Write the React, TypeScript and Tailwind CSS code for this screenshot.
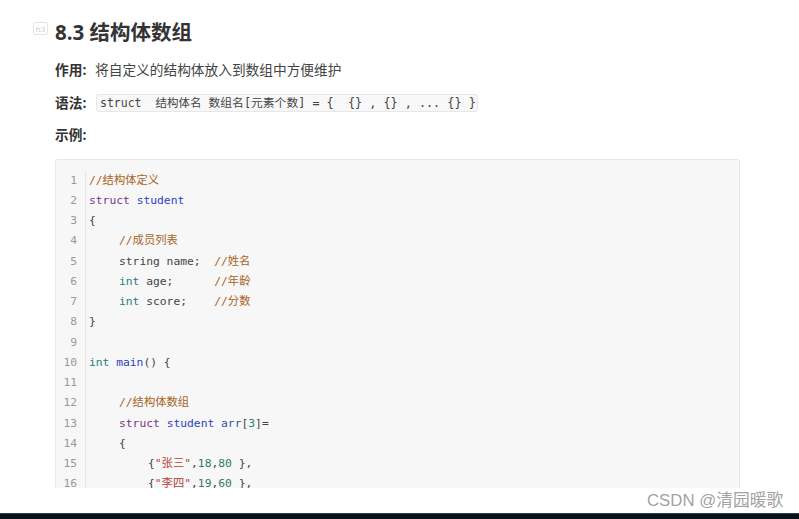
import React from 'react';

const mono = `font-['DejaVu_Sans_Mono','Noto_Sans_CJK_SC',monospace]`;

const kw = 'text-[#77358a]';
const ty = 'text-[#1f7f7f]';
const fn = 'text-[#2b3fc4]';
const cm = 'text-[#a8641f]';
const st = 'text-[#b5443a]';
const nm = 'text-[#2f7d5d]';

type Seg = [string, string?];

// indent is the number of tab stops at the start of the line
const lines: { indent?: number; segs: Seg[] }[] = [
  { segs: [['//结构体定义', cm]] },
  { segs: [['struct', kw], [' '], ['student', fn]] },
  { segs: [['{']] },
  { indent: 1, segs: [['//成员列表', cm]] },
  { indent: 1, segs: [['string name;  '], ['//姓名', cm]] },
  { indent: 1, segs: [['int', ty], [' age;      '], ['//年龄', cm]] },
  { indent: 1, segs: [['int', ty], [' score;    '], ['//分数', cm]] },
  { segs: [['}']] },
  { segs: [] },
  { segs: [['int', ty], [' '], ['main', fn], ['() {']] },
  { segs: [] },
  { indent: 1, segs: [['//结构体数组', cm]] },
  { indent: 1, segs: [['struct', kw], [' '], ['student', fn], [' '], ['arr', 'text-[#2b4fa8]'], ['['], ['3', nm], [']=']] },
  { indent: 1, segs: [['{']] },
  { indent: 2, segs: [['{'], ['"张三"', st], [','], ['18', nm], [','], ['80', nm], [' },']] },
  { indent: 2, segs: [['{'], ['"李四"', st], [','], ['19', nm], [','], ['60', nm], [' },']] },
];

export default function App() {
  return (
    <div className="relative flex h-[519px] w-[799px] flex-col overflow-hidden bg-white font-['Open_Sans','Noto_Sans_CJK_SC',sans-serif] text-[#333]">
      <div className="h-[488px] overflow-hidden pl-[55px] pr-[59px]">
        <div className="relative mt-[18px] flex h-[28px] items-center">
          <h3 className="text-[20.5px] font-bold leading-[28px] text-[#333]">8.3 结构体数组</h3>
          <span className="absolute left-[-22px] top-[4px] flex h-[13px] w-[15px] items-center justify-center rounded-[2px] border border-[#e4e4e4] text-[8px] leading-none text-[#c8c8c8]">
            h3
          </span>
          <span className="absolute left-[49px] top-[13px] text-[12px] leading-none font-['Liberation_Serif',serif] text-[#444]">
            I
          </span>
        </div>

        <p className="mt-[14px] flex h-[20px] items-center text-[13.7px] leading-[20px]">
          <strong className="w-[41px] shrink-0 font-bold">作用:</strong>
          <span className="ml-[-1px] text-[#444]">将自定义的结构体放入到数组中方便维护</span>
        </p>

        <p className="mt-[13px] flex h-[20px] items-center text-[13.7px] leading-[20px]">
          <strong className="w-[41px] shrink-0 font-bold">语法:</strong>
          <code className={`h-[18px] w-[382px] whitespace-pre rounded-[3px] border border-[#e7e7e7] bg-[#f8f8f8] pl-[3px] text-[11.5px] leading-[17px] text-[#444] ${mono}`}>
            <span>struct  结构体名</span>
            <span className="text-[11.8px]">{' 数组名[元素个数] = {  {} , {} , ... {} }'}</span>
          </code>
        </p>

        <p className="mt-[12px] h-[20px] text-[13.7px] font-bold leading-[20px]">示例:</p>

        <div className={`mt-[14px] h-[340px] overflow-hidden rounded-t-[3px] border border-[#e7e7e7] bg-[#f7f7f7] pt-[10.5px] text-[11.3px] leading-[20.25px] ${mono}`}>
          {lines.map((line, i) => (
            <div key={i} className="flex h-[20.25px]">
              <span className="w-[28px] shrink-0 pr-[7px] text-right text-[#999]">{i + 1}</span>
              <span className="ml-[1px] w-[1px] shrink-0 bg-[#e4e4e4]" />
              <span className="ml-[3px] flex whitespace-pre text-[#444]">
                {line.indent === 1 && <span className="w-[30px] shrink-0" />}
                {line.indent === 2 && <span className="w-[59px] shrink-0" />}
                <span>
                  {line.segs.map((s, j) => (
                    <span key={j} className={s[1]}>{s[0]}</span>
                  ))}
                </span>
              </span>
            </div>
          ))}
        </div>
      </div>

      <div className="flex-1" />
      <div className="h-[6px] border-t border-[#3a4148] bg-[#07111a]" />

      <span className="absolute left-[647px] top-[490px] text-[16.8px] leading-[22px] font-['Liberation_Sans','Noto_Sans_CJK_SC',sans-serif] text-[#a3a3a3]">
        CSDN @清园暖歌
      </span>
    </div>
  );
}
